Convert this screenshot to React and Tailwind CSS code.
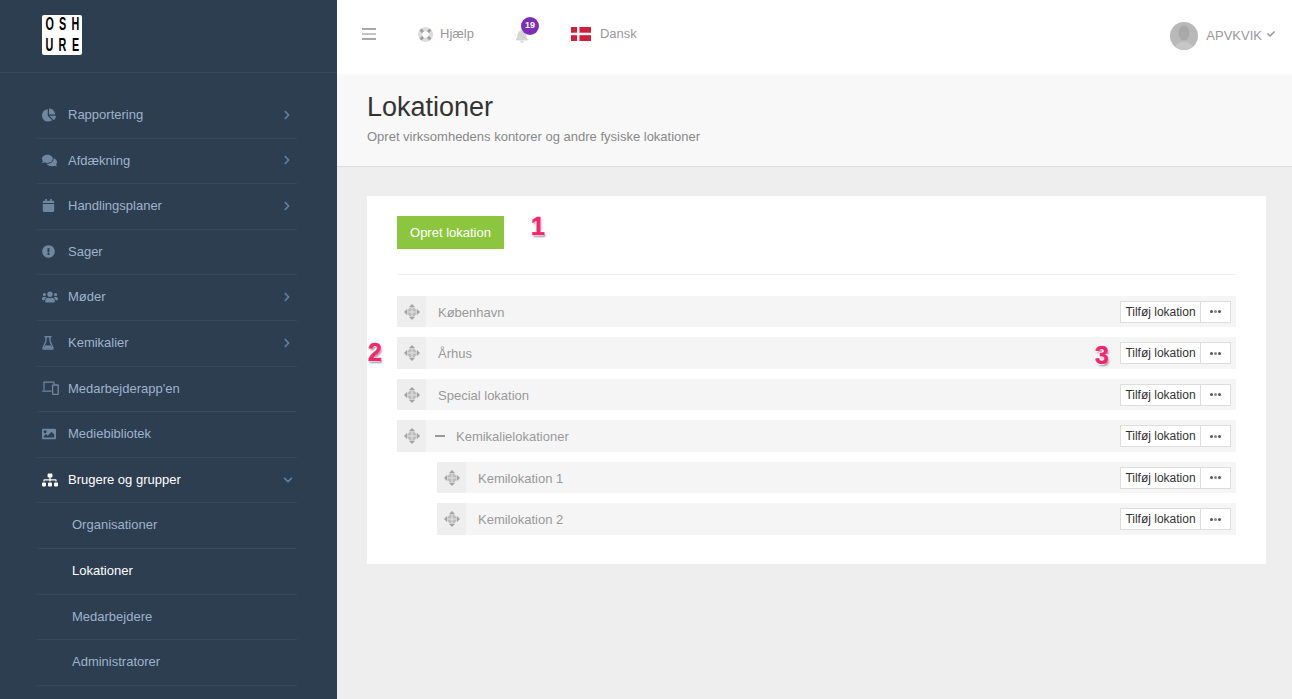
import {
  FaChartPie,
  FaComments,
  FaCalendar,
  FaExclamationCircle,
  FaUsers,
  FaImage,
  FaSitemap,
  FaBell,
  FaChevronRight,
  FaChevronDown,
  FaCheck,
} from "react-icons/fa";

function FlaskIcon() {
  return (
    <svg viewBox="0 0 12 14" className="w-[12px] h-[14px]" fill="none" stroke="currentColor">
      <path d="M2.5 .7h7" strokeWidth="1.4" />
      <path d="M4 1v4L1 12c-.2.6.1 1.2.8 1.2h8.4c.7 0 1-.6.8-1.2L8 5V1" strokeWidth="1.3" />
      <path d="M3 9.5h6l1.4 3.2H1.600z" fill="currentColor" stroke="none" />
    </svg>
  );
}

function DevicesIcon() {
  return (
    <svg viewBox="0 0 17 14" className="w-[17px] h-[14px]" fill="none" stroke="currentColor">
      <path d="M2 9V1.2h10V3" strokeWidth="1.2" />
      <path d="M0 9.5h9.500v1.300H1.200C.5 10.800 0 10.300 0 9.500z" fill="currentColor" stroke="none" />
      <rect x="10.600" y="4" width="5.600" height="9.400" rx=".8" strokeWidth="1.300" />
    </svg>
  );
}

function MoveIcon() {
  return (
    <svg viewBox="0 0 16 16" className="w-[16px] h-[16px]" fill="#a3a3a3">
      <path d="M8 0l3.200 3.200H4.800zM8 16l-3.200-3.200h6.400zM0 8l3.200-3.200v6.400zM16 8l-3.200 3.200V4.800z" />
      <circle cx="8" cy="8" r="4.600" fill="#bcbcbc" />
      <path d="M7.500 3.500h1v9h-1zM3.500 7.500h9v1h-9z" fill="#e4e4e4" />
    </svg>
  );
}

function LifeRingIcon() {
  return (
    <svg viewBox="0 0 16 16" className="ml-[42px] w-[15px] h-[15px] mt-[1px]">
      <circle cx="8" cy="8" r="8" fill="#dcdcdc" />
      <path d="M2.700 2.700l2.800 2.800M13.300 2.700l-2.800 2.800M2.700 13.300l2.800-2.800M13.300 13.300l-2.800-2.800" stroke="#9e9e9e" strokeWidth="3" />
      <circle cx="8" cy="8" r="3.400" fill="#ffffff" />
    </svg>
  );
}

function AvatarIcon() {
  return (
    <div className="w-[28px] h-[28px] rounded-full bg-[#b9b9b9] overflow-hidden">
      <svg viewBox="0 0 28 28" className="w-[28px] h-[28px]" fill="#a9a9a9">
        <ellipse cx="14" cy="11" rx="5.500" ry="7.500" />
        <path d="M5 28c0-5 3-6.500 6.500-8h5c3.500 1.500 6.500 3 6.500 8z" fill="#c6c6c6" />
      </svg>
    </div>
  );
}

function Logo() {
  const rows = [["O", "S", "H"], ["U", "R", "E"]];
  return (
    <div className="w-[40px] h-[40px] bg-white rounded-[2px] flex flex-col items-center justify-center text-[18px] leading-[21px] font-bold text-black">
      {rows.map((row) => (
        <div key={row[0]} className="flex">
          {row.map((letter) => (
            <span key={letter} className="w-[13px] text-center scale-x-[.6]">
              {letter}
            </span>
          ))}
        </div>
      ))}
    </div>
  );
}

const menu = [
  { label: "Rapportering", icon: <FaChartPie size={14} />, arrow: true },
  { label: "Afdækning", icon: <FaComments size={15} />, arrow: true },
  { label: "Handlingsplaner", icon: <FaCalendar size={13} />, arrow: true },
  { label: "Sager", icon: <FaExclamationCircle size={13} /> },
  { label: "Møder", icon: <FaUsers size={16} />, arrow: true },
  { label: "Kemikalier", icon: <FlaskIcon />, arrow: true },
  { label: "Medarbejderapp'en", icon: <DevicesIcon /> },
  { label: "Mediebibliotek", icon: <FaImage size={14} /> },
];

const subMenu = [
  { label: "Organisationer" },
  { label: "Lokationer", active: true },
  { label: "Medarbejdere" },
  { label: "Administratorer" },
];

const locations = [
  { name: "København" },
  { name: "Århus", marker: true },
  { name: "Special lokation" },
  { name: "Kemikalielokationer", open: true },
  { name: "Kemilokation 1", child: true },
  { name: "Kemilokation 2", child: true },
];

function Marker({ children, className }) {
  return (
    <span
      className={`absolute font-bold text-[25px] leading-none text-[#f5256f] [-webkit-text-stroke:0.5px_#f5256f] [text-shadow:-1px_-1px_0_#fff,1px_-1px_0_#fff,-1px_1px_0_#fff,1px_2px_2px_#999] ${className}`}
    >
      {children}
    </span>
  );
}

function Sidebar() {
  return (
    <aside className="w-[337px] shrink-0 bg-[#2d3e50] flex flex-col">
      <div className="h-[73px] shrink-0 border-b border-[#364a5e] pl-[42px] pt-[15px]">
        <Logo />
      </div>
      <nav className="mx-[37px] w-[260px] pt-[20px] text-[13px] text-[#9db3cc]">
        {menu.map((item) => (
          <div key={item.label} className="h-[45.6px] border-b border-[#35485c] flex items-center pb-[1px] pl-[5px] pr-[5px]">
            <span className="w-[26px] text-[#71879e] flex items-center">{item.icon}</span>
            <span className="flex-1">{item.label}</span>
            {item.arrow && <FaChevronRight size={10} className="text-[#5f81a3]" />}
          </div>
        ))}
        <div className="h-[45.6px] border-b border-[#35485c] flex items-center pb-[1px] pl-[5px] pr-[4px] text-white">
          <span className="w-[26px] flex items-center">
            <FaSitemap size={16} />
          </span>
          <span className="flex-1">Brugere og grupper</span>
          <FaChevronDown size={10} className="text-[#5f81a3]" />
        </div>
        {subMenu.map((item) => (
          <div
            key={item.label}
            className={`h-[45.6px] border-b border-[#35485c] flex items-center pb-[1px] pl-[35px] ${item.active ? "text-white" : ""}`}
          >
            {item.label}
          </div>
        ))}
      </nav>
    </aside>
  );
}

function Topbar() {
  return (
    <header className="h-[74px] shrink-0 bg-white flex items-center pl-[25px] pr-[17px] pb-[6px] text-[13px] text-[#999999]">
      <div className="w-[14px] flex flex-col gap-[3px]">
        <span className="h-[2px] bg-[#a8a8a8]" />
        <span className="h-[2px] bg-[#c4c4c4]" />
        <span className="h-[2px] bg-[#a8a8a8]" />
      </div>
      <LifeRingIcon />
      <span className="ml-[7px]">Hjælp</span>
      <div className="relative ml-[41px]">
        <FaBell size={14} className="text-[#d5d5d5] mt-[3px]" />
        <span className="absolute -top-[9px] left-[6px] w-[18px] h-[18px] rounded-full bg-[#7b2fb5] text-white text-[9px] font-bold flex items-center justify-center">
          19
        </span>
      </div>
      <svg viewBox="0 0 20 14" className="ml-[42px] w-[20px] h-[14px] -mt-[1px]">
        <rect width="20" height="14" fill="#cf1f3d" />
        <rect x="6" width="2.500" height="14" fill="#f4f4f4" />
        <rect y="5.700" width="20" height="2.500" fill="#f4f4f4" />
      </svg>
      <span className="ml-[9px] -mt-[1px]">Dansk</span>
      <div className="ml-auto flex items-center mt-[4px]">
        <AvatarIcon />
        <span className="ml-[8px] -mt-[1px]">APVKVIK</span>
        <FaCheck size={8} className="ml-[5px] -mt-[4px]" />
      </div>
    </header>
  );
}

function LocationRow({ item }) {
  return (
    <div className={`relative h-[31.500px] bg-[#f5f5f5] flex items-center text-[13px] ${item.child ? "ml-[40px]" : ""}`}>
      <div className="w-[29px] h-full bg-[#eeeeee] flex items-center justify-center">
        <MoveIcon />
      </div>
      {item.open && <span className="ml-[9px] w-[10px] h-[2px] bg-[#999999]" />}
      <span className={`${item.open ? "ml-[11px]" : "ml-[12px]"} pt-[2px] text-[#999999]`}>{item.name}</span>
      <div className="ml-auto mr-[5px] h-[22px] flex bg-white border border-[#dddddd] text-[12px] text-[#333333]">
        <span className="w-[80px] border-r border-[#dddddd] flex items-center justify-center">Tilføj lokation</span>
        <span className="w-[29px] flex items-center justify-center gap-[1px]">
          <i className="w-[3px] h-[3px] rounded-full bg-[#555555]" />
          <i className="w-[3px] h-[3px] rounded-full bg-[#888888]" />
          <i className="w-[3px] h-[3px] rounded-full bg-[#555555]" />
        </span>
      </div>
      {item.marker && (
        <>
          <Marker className="-left-[29px] top-[3px]">2</Marker>
          <Marker className="left-[698px] top-[6px]">3</Marker>
        </>
      )}
    </div>
  );
}

export default function App() {
  return (
    <div className="w-[1292px] h-[699px] flex overflow-hidden font-['Liberation_Sans',Arial,sans-serif]">
      <Sidebar />
      <main className="flex-1 flex flex-col bg-[#eeeeee]">
        <Topbar />
        <section className="h-[93px] shrink-0 bg-[#f8f8f8] border-b border-[#dddddd] pl-[30px] pt-[16px]">
          <h1 className="text-[27px] leading-[34px] text-[#333333]">Lokationer</h1>
          <p className="mt-[4px] text-[13px] leading-[18px] text-[#888888]">
            Opret virksomhedens kontorer og andre fysiske lokationer
          </p>
        </section>
        <section className="relative ml-[30px] mt-[29px] w-[899px] h-[368px] bg-white px-[30px] pt-[20px]">
          <div className="relative pb-[25px] border-b border-[#eeeeee]">
            <button className="w-[107px] h-[33px] bg-[#8cc63f] text-white text-[13px]">Opret lokation</button>
            <Marker className="left-[134px] -top-[2px]">1</Marker>
          </div>
          <div className="mt-[20.800px] flex flex-col gap-[10px]">
            {locations.map((item) => (
              <LocationRow key={item.name} item={item} />
            ))}
          </div>
        </section>
      </main>
    </div>
  );
}
